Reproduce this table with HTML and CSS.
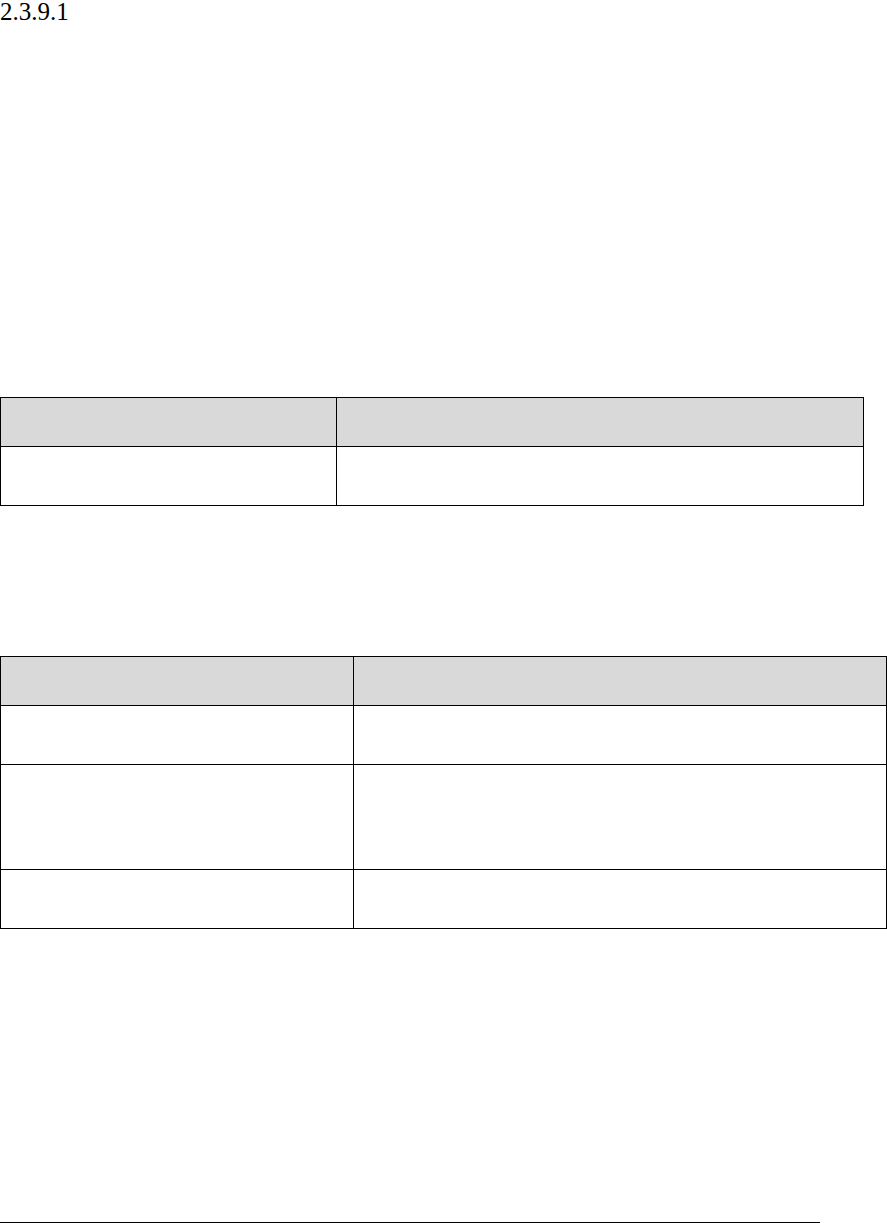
FILE: index.html
```html
<!DOCTYPE html>
<html lang="en">
<head>
<meta charset="utf-8">
<title>2.3.9.1</title>
<link rel="stylesheet" href="styles.css">
</head>
<body>
<main class="page">
  <h1 class="section-num">2.3.9.1</h1>

  <div class="grid-table table-one">
    <div class="cell head"></div>
    <div class="cell head"></div>
    <div class="cell row-std"></div>
    <div class="cell row-std"></div>
  </div>

  <div class="grid-table table-two">
    <div class="cell head"></div>
    <div class="cell head"></div>
    <div class="cell row-std"></div>
    <div class="cell row-std"></div>
    <div class="cell row-tall"></div>
    <div class="cell row-tall"></div>
    <div class="cell row-std"></div>
    <div class="cell row-std"></div>
  </div>

  <hr class="footnote-rule">
</main>
</body>
</html>
```

FILE: styles.css
```css
html, body {
  margin: 0;
  padding: 0;
  background: #ffffff;
}

.page {
  display: flex;
  flex-direction: column;
  align-items: flex-start;
  font-family: "Liberation Serif", "Times New Roman", serif;
  color: #000;
}

.section-num {
  margin: 0;
  font-size: 25px;
  font-weight: normal;
  line-height: 24px;
  letter-spacing: 0;
}

.grid-table {
  display: grid;
  box-sizing: border-box;
  border-top: 1.5px solid #000;
  border-left: 1.5px solid #000;
}

.table-one {
  margin-top: 373px;
  width: 864px;
  grid-template-columns: 336px 1fr;
}

.table-two {
  margin-top: 150px;
  width: 887px;
  grid-template-columns: 353px 1fr;
}

.cell {
  box-sizing: border-box;
  border-right: 1.5px solid #000;
  border-bottom: 1.5px solid #000;
}

.head {
  height: 49px;
  background: #d9d9d9;
}

.row-std {
  height: 59px;
}

.row-tall {
  height: 105px;
}

.footnote-rule {
  margin: 293px 0 0 0;
  width: 820px;
  height: 0;
  border: 0;
  border-top: 1.5px solid #000;
}
```
